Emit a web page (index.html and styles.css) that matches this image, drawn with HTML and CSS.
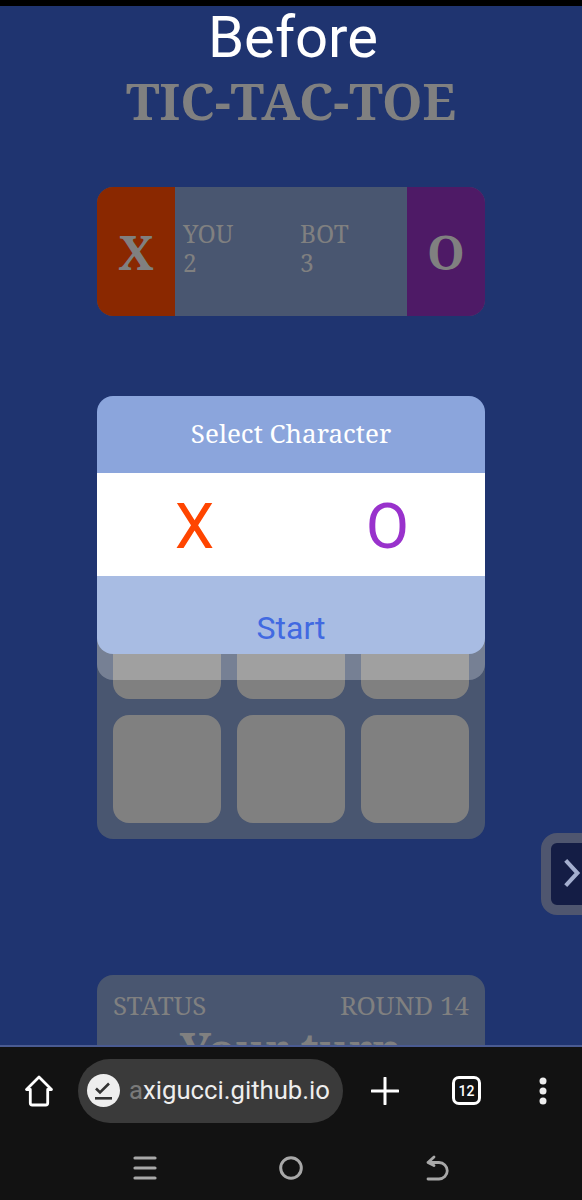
FILE: index.html
```html
<!DOCTYPE html>
<html lang="en">
<head>
<meta charset="utf-8">
<title>Tic-Tac-Toe</title>
<link rel="stylesheet" href="styles.css">
</head>
<body>
<div class="phone">
  <div class="status-strip"></div>
  <main class="page">
    <h2 class="before">Before</h2>
    <h1 class="title">TIC-TAC-TOE</h1>
    <section class="score">
      <div class="mark mark-x">X</div>
      <div class="score-mid">
        <div class="score-col"><span>YOU</span><span>2</span></div>
        <div class="score-col"><span>BOT</span><span>3</span></div>
      </div>
      <div class="mark mark-o">O</div>
    </section>
    <section class="board">
      <div class="cell"></div><div class="cell"></div><div class="cell"></div>
      <div class="cell"></div><div class="cell"></div><div class="cell"></div>
      <div class="cell"></div><div class="cell"></div><div class="cell"></div>
    </section>
    <section class="status">
      <div class="status-row"><span>STATUS</span><span>ROUND 14</span></div>
      <div class="turn">Your turn</div>
    </section>
    <div class="shelf"></div>
    <div class="modal">
      <div class="modal-head">Select Character</div>
      <div class="modal-body">
        <span class="pick pick-x">X</span>
        <span class="pick pick-o">O</span>
      </div>
      <div class="modal-foot">Start</div>
    </div>
    <div class="side-tab">
      <svg class="side-chevron" viewBox="0 0 20 32"><path d="M3 2l13 14L3 30" fill="none" stroke="#a4afcf" stroke-width="4.500"/></svg>
    </div>
  </main>
  <footer class="chrome">
    <div class="toolbar">
      <svg class="ic-home" viewBox="0 0 30 34"><path d="M15 3L2.500 15.500h3.800v13.500a2 2 0 0 0 2 2h13.400a2 2 0 0 0 2-2V15.500h3.800z" fill="none" stroke="#fff" stroke-width="2.800" stroke-linejoin="round"/></svg>
      <div class="url">
        <svg class="ic-site" viewBox="0 0 33 33"><circle cx="16.500" cy="16.500" r="16.500" fill="#eee"/><path d="M9 14.500l4 4 9-9" fill="none" stroke="#333" stroke-width="2.600"/><rect x="8" y="23" width="17" height="2.600" fill="#333"/></svg>
        <span class="url-text"><span class="url-fade">a</span>xigucci.github.io</span>
      </div>
      <svg class="ic-plus" viewBox="0 0 28 28"><path d="M14 1v26M1 14h26" stroke="#fff" stroke-width="3" stroke-linecap="round"/></svg>
      <div class="tabs-count">12</div>
      <svg class="ic-dots" viewBox="0 0 8 28"><circle cx="4" cy="4" r="3.500" fill="#eee"/><circle cx="4" cy="14" r="3.500" fill="#eee"/><circle cx="4" cy="24" r="3.500" fill="#eee"/></svg>
    </div>
    <div class="navbar">
      <svg class="ic-nav" viewBox="0 0 24 26"><path d="M2 3h20M2 13h20M2 23h20" stroke="#a8a8a8" stroke-width="3.200" stroke-linecap="round"/></svg>
      <svg class="ic-nav" viewBox="0 0 24 26"><circle cx="12" cy="13" r="10.300" fill="none" stroke="#a8a8a8" stroke-width="3"/></svg>
      <svg class="ic-nav" viewBox="0 0 24 26"><path d="M9 2L3 7.500 9 10.500M3 7.500h11a8 8 0 0 1 0 16.500H3" fill="none" stroke="#a8a8a8" stroke-width="2.800" stroke-linecap="round" stroke-linejoin="round"/></svg>
    </div>
  </footer>
</div>
</body>
</html>
```
FILE: styles.css
```css
* { box-sizing: border-box; }
html, body { margin: 0; padding: 0; background: #121212; }
body { width: 582px; height: 1200px; overflow: hidden; }

.phone { display: flex; flex-direction: column; width: 582px; height: 1200px; }
.status-strip { height: 6px; background: #000; flex: none; }

.page {
  position: relative;
  flex: 1;
  min-height: 0;
  overflow: hidden;
  background: #1f3470;
  display: flex;
  flex-direction: column;
  align-items: center;
  font-family: "Noto Serif", "DejaVu Serif", serif;
  color: #808080;
}
.before {
  margin: 0 0 0 4px;
  height: 62px;
  font: 400 58px/62px Roboto, sans-serif;
  color: #fff;
}
.title {
  margin: 2px 0 0;
  height: 60px;
  font-size: 51.500px;
  line-height: 60px;
  font-weight: 700;
}

.score {
  margin-top: 57px;
  width: 388px;
  height: 129px;
  display: flex;
  border-radius: 16px;
  overflow: hidden;
  background: #495670;
  flex: none;
}
.mark {
  width: 78px;
  flex: none;
  display: flex;
  align-items: center;
  justify-content: center;
  font-size: 48px;
  font-weight: 700;
}
.mark-x { background: #8a2800; }
.mark-o { background: #4e1a66; }
.score-mid { flex: 1; min-width: 0; display: grid; grid-template-columns: 117px 1fr; padding: 32px 8px 0; }
.score-col { display: flex; flex-direction: column; font-size: 24.500px; line-height: 29px; }

.board {
  margin-top: 135px;
  width: 388px;
  height: 388px;
  padding: 16px;
  flex: none;
  display: grid;
  grid-template-columns: repeat(3, 108px);
  grid-auto-rows: 108px;
  gap: 16px;
  background: #495670;
  border-radius: 16px;
}
.cell { background: #808080; border-radius: 16px; }

.status {
  margin-top: 136px;
  width: 388px;
  height: 160px;
  flex: none;
  padding: 14px 16px;
  background: #495670;
  border-radius: 16px;
}
.status-row { display: flex; justify-content: space-between; font-size: 26px; line-height: 32px; }
.turn { text-align: center; font-size: 45px; line-height: 56px; font-weight: 700; }

.shelf {
  position: absolute;
  left: 97px;
  top: 560px;
  width: 388px;
  height: 114px;
  background: rgba(255, 255, 255, .25);
  border-radius: 16px;
}
.modal {
  position: absolute;
  left: 97px;
  top: 390px;
  width: 388px;
  height: 258px;
  border-radius: 16px;
  overflow: hidden;
  display: flex;
  flex-direction: column;
}
.modal-head {
  height: 77px;
  padding-bottom: 4px;
  background: #8ba5dc;
  color: #fff;
  font-size: 26px;
  display: flex;
  align-items: center;
  justify-content: center;
}
.modal-body {
  height: 103px;
  padding: 3px 0 0 2px;
  background: #fff;
  display: flex;
  justify-content: space-around;
  align-items: center;
  font: 400 63px/1 Roboto, sans-serif;
}
.pick-x { color: #ff4500; }
.pick-o { color: #9932cc; }
.modal-foot {
  flex: 1;
  background: #a8bce3;
  color: #4169e1;
  font: 400 32px/1 Roboto, sans-serif;
  display: flex;
  align-items: flex-end;
  justify-content: center;
  padding-bottom: 10px;
}

.side-tab {
  position: absolute;
  left: 541px;
  top: 827px;
  width: 60px;
  height: 82px;
  background: #141d45;
  border: 10px solid #4f566f;
  border-radius: 16px;
  padding: 15px 0 0 12px;
}
.side-chevron { display: block; width: 18px; height: 30px; }

.chrome {
  flex: none;
  height: 155px;
  background: #121212;
  border-top: 2px solid #4a5b92;
  color: #fff;
}
.toolbar {
  height: 87px;
  display: flex;
  align-items: center;
}
.ic-home { width: 30px; height: 34px; margin-left: 24px; flex: none; }
.url {
  margin-left: 24px;
  width: 265px;
  height: 64px;
  background: #3a3a3a;
  border-radius: 32px;
  display: flex;
  align-items: center;
  padding-left: 9px;
  flex: none;
}
.ic-site { width: 33px; height: 33px; flex: none; }
.url-text { margin-left: 9px; font: 400 25.700px/1 Roboto, sans-serif; color: #eee; white-space: nowrap; }
.url-fade { opacity: .35; }
.ic-plus { width: 28px; height: 28px; margin-left: 28px; flex: none; }
.tabs-count {
  margin-left: 53px;
  width: 29px;
  height: 29px;
  border: 3px solid #fff;
  border-radius: 7px;
  font: 500 14px/1 Roboto, sans-serif;
  display: flex;
  align-items: center;
  justify-content: center;
  flex: none;
}
.ic-dots { width: 8px; height: 28px; margin-left: 58px; flex: none; }
.navbar { display: flex; align-items: center; justify-content: center; gap: 122px; height: 68px; }
.ic-nav { width: 24px; height: 26px; flex: none; }
```
